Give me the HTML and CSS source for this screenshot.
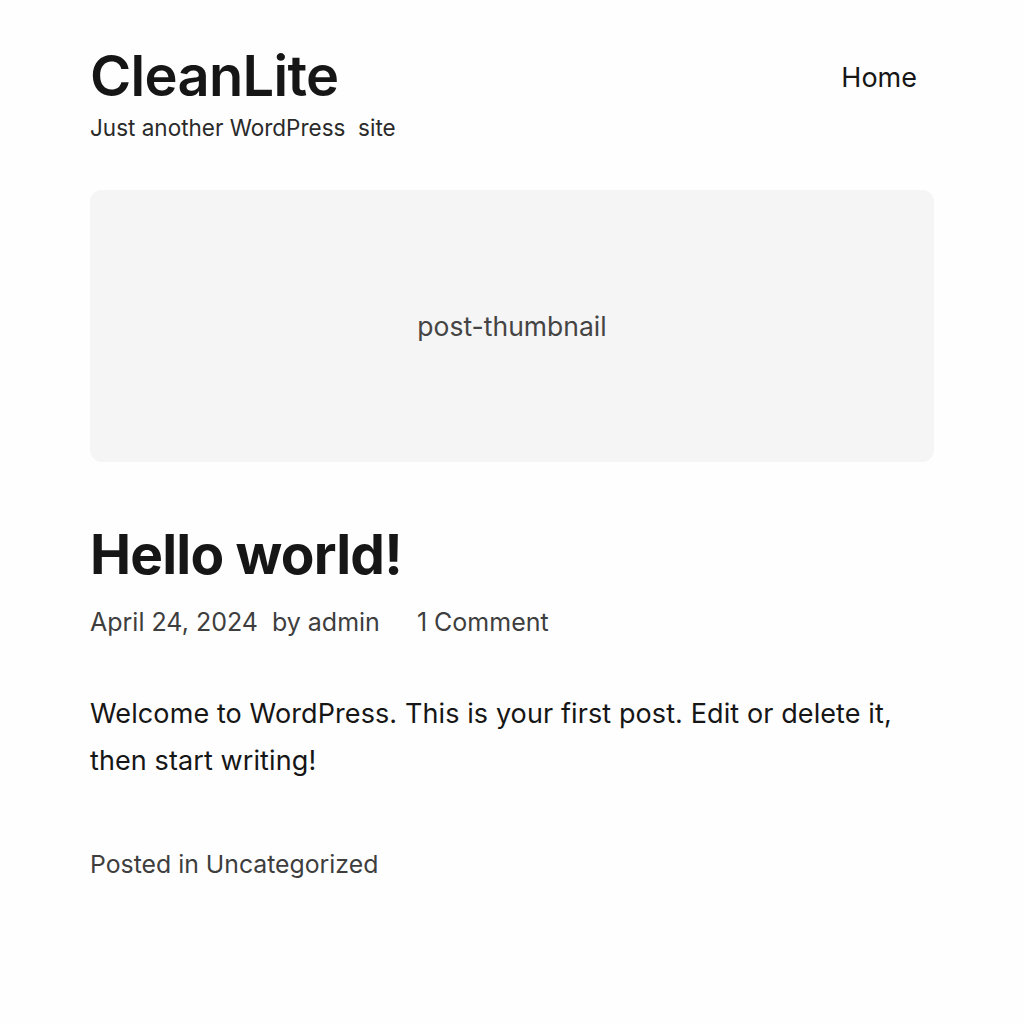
FILE: index.html
```html
<!DOCTYPE html>
<html lang="en">
<head>
<meta charset="utf-8">
<title>CleanLite</title>
<link rel="stylesheet" href="styles.css">
</head>
<body>
<div class="page">
  <header class="site-header">
    <div class="branding">
      <h1 class="site-title">CleanLite</h1>
      <p class="site-desc">Just another WordPress&nbsp; site</p>
    </div>
    <nav class="nav"><a href="#" class="nav-link">Home</a></nav>
  </header>
  <main>
    <article class="post">
      <div class="thumb"><span class="thumb-label">post-thumbnail</span></div>
      <h2 class="post-title">Hello world!</h2>
      <div class="meta">
        <span class="date">April 24, 2024</span>
        <span class="author">by admin</span>
        <span class="comments">1 Comment</span>
      </div>
      <div class="content">
        <p>Welcome to WordPress. This is your first post. Edit or delete it, then start writing!</p>
      </div>
      <footer class="post-footer">Posted in Uncategorized</footer>
    </article>
  </main>
</div>
</body>
</html>
```
FILE: styles.css
```css
* { box-sizing: border-box; }
html, body { margin: 0; padding: 0; background: #fefefe; }
body {
  font-family: Inter, "Noto Sans", sans-serif;
  color: #161616;
}
.page {
  width: 844px;
  margin-left: 90px;
  padding-top: 44px;
}
.site-header {
  display: flex;
  justify-content: space-between;
  align-items: flex-start;
  padding-right: 17px;
}
.site-title {
  margin: 0;
  font-size: 56px;
  font-weight: 600;
  letter-spacing: -0.7px;
  line-height: 64px;
}
.site-desc {
  margin: 4px 0 0;
  font-size: 22.5px;
  color: #2a2a2a;
  line-height: 32px;
}
.nav { padding-top: 16px; }
.nav-link {
  font-size: 27px;
  color: #161616;
  text-decoration: none;
  line-height: 36px;
}
.thumb {
  margin-top: 46px;
  height: 272px;
  background: #f5f5f5;
  border-radius: 12px;
  display: flex;
  align-items: center;
  justify-content: center;
}
.thumb-label {
  font-size: 26.5px;
  color: #444;
}
.post-title {
  margin: 60px 0 0;
  font-size: 55px;
  font-weight: 700;
  letter-spacing: -0.8px;
  line-height: 64px;
}
.meta {
  margin-top: 20px;
  display: flex;
  font-size: 25px;
  color: #3e3e3e;
  line-height: 32px;
}
.author { margin-left: 14px; }
.comments { margin-left: 37px; }
.content { margin-top: 52px; }
.content p {
  margin: 0;
  font-size: 27px;
  letter-spacing: 0.1px;
  line-height: 47px;
  color: #161616;
}
.post-footer {
  margin-top: 64px;
  font-size: 24.8px;
  color: #3e3e3e;
  line-height: 32px;
}
```
